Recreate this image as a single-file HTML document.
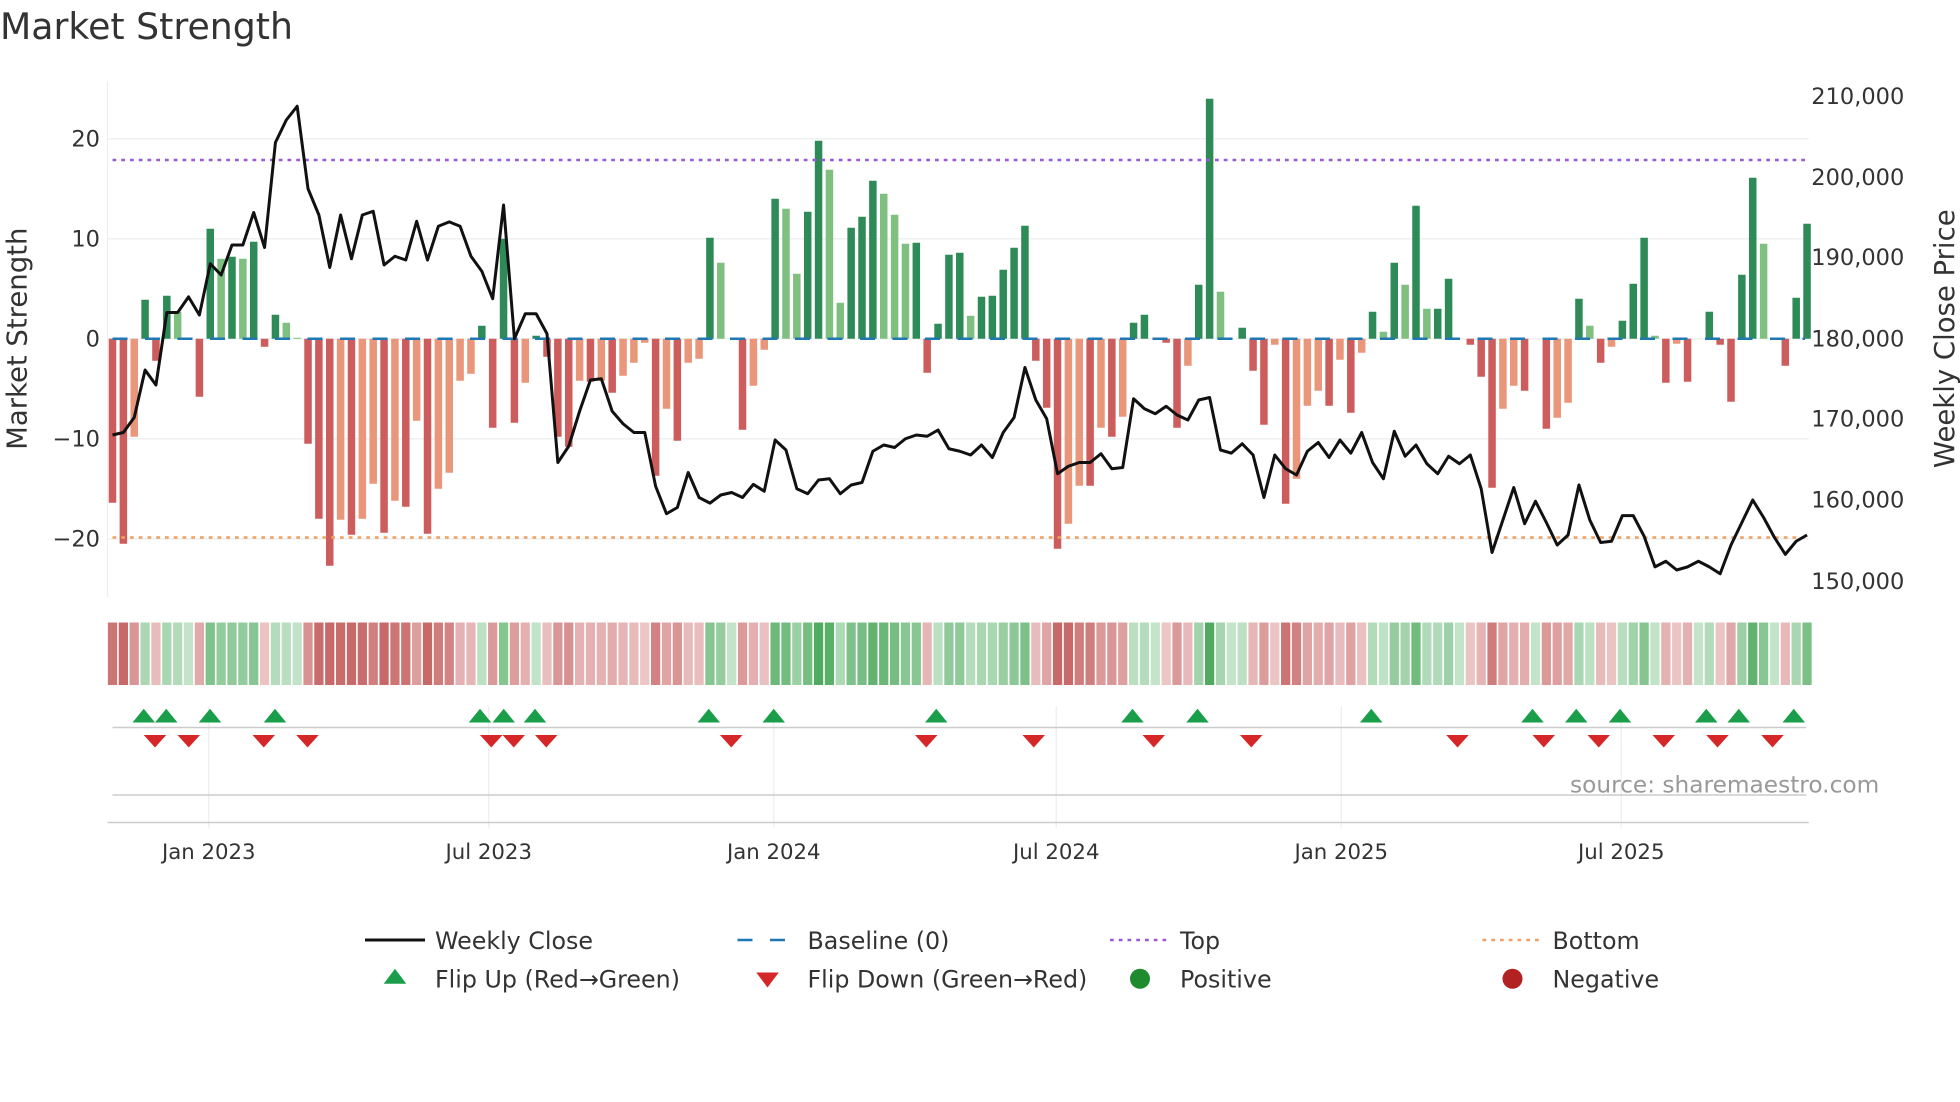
<!DOCTYPE html>
<html><head><meta charset="utf-8"><style>
html,body{margin:0;padding:0;background:#fff;width:1960px;height:1102px;overflow:hidden}
svg{display:block}
text{font-family:"DejaVu Sans","Liberation Sans",sans-serif;fill:#333}
</style></head><body>
<svg id="s" width="1960" height="1102" viewBox="0 0 1568 881.6" xmlns="http://www.w3.org/2000/svg">
<text x="0" y="31" font-size="29">Market Strength</text>
<g id="grid"></g>
<line x1="86" y1="65" x2="86" y2="478" stroke="#eee" stroke-width="1"/>
<g font-size="18" text-anchor="end">
<text x="80" y="117">20</text><text x="80" y="197">10</text><text x="80" y="277">0</text>
<text x="80" y="357">−10</text><text x="80" y="437">−20</text></g>
<g font-size="18">
<text x="1449" y="83">210,000</text><text x="1449" y="148">200,000</text><text x="1449" y="212">190,000</text>
<text x="1449" y="277">180,000</text><text x="1449" y="341">170,000</text><text x="1449" y="406">160,000</text>
<text x="1449" y="471">150,000</text></g>
<text transform="translate(21,271) rotate(-90)" font-size="22" text-anchor="middle">Market Strength</text>
<text transform="translate(1563,271) rotate(-90)" font-size="22" text-anchor="middle">Weekly Close Price</text>
<g id="bars"></g>
<line x1="90" y1="128" x2="1444" y2="128" stroke="#9b59d6" stroke-width="2" stroke-dasharray="3,4"/>
<line x1="90" y1="430" x2="1444" y2="430" stroke="#f0a060" stroke-width="2" stroke-dasharray="3,4"/>
<g id="base"></g>
<polyline id="pl" fill="none" stroke="#111" stroke-width="2.4" stroke-linejoin="round"/>
<g id="heat"></g>
<g id="vg" stroke="#eee" stroke-width="1"></g>
<line x1="90" y1="582" x2="1445" y2="582" stroke="#ccc" stroke-width="1.2"/>
<line x1="90" y1="636" x2="1445" y2="636" stroke="#ccc" stroke-width="1.2"/>
<line x1="86" y1="658" x2="1447" y2="658" stroke="#ccc" stroke-width="1.2"/>
<g id="mk"></g>
<text x="1256" y="634" font-size="18.6" fill="#999" style="fill:#999">source: sharemaestro.com</text>
<g font-size="17" text-anchor="middle">
<text x="167" y="687">Jan 2023</text><text x="391" y="687">Jul 2023</text><text x="619" y="687">Jan 2024</text>
<text x="845" y="687">Jul 2024</text><text x="1073" y="687">Jan 2025</text><text x="1297" y="687">Jul 2025</text></g>
<g font-size="19">
<line x1="292" y1="752" x2="340" y2="752" stroke="#111" stroke-width="2.4"/><text x="348" y="759">Weekly Close</text>
<line x1="590" y1="752" x2="636" y2="752" stroke="#1f77b4" stroke-width="2" stroke-dasharray="12,14"/><text x="646" y="759">Baseline (0)</text>
<line x1="888" y1="752" x2="934" y2="752" stroke="#9b59d6" stroke-width="2" stroke-dasharray="3,4"/><text x="944" y="759">Top</text>
<line x1="1186" y1="752" x2="1232" y2="752" stroke="#f0a060" stroke-width="2" stroke-dasharray="3,4"/><text x="1242" y="759">Bottom</text>
<polygon points="307,787 325,787 316,775" fill="#1a9e4a"/><text x="348" y="790">Flip Up (Red→Green)</text>
<polygon points="605,778 623,778 614,790" fill="#d62728"/><text x="646" y="790">Flip Down (Green→Red)</text>
<circle cx="912" cy="783" r="8" fill="#1e8c2e"/><text x="944" y="790">Positive</text>
<circle cx="1210" cy="783" r="8" fill="#b22222"/><text x="1242" y="790">Negative</text>
</g>
</svg>
<script>
var V=[-16.4,-20.5,-9.8,3.9,-2.2,4.3,2.7,0,-5.8,11,8,8.2,8,9.7,-0.8,2.4,1.6,0.1,-10.5,-18,-22.7,-18.1,-19.6,-18,-14.5,-19.4,-16.2,-16.8,-8.2,-19.5,-15,-13.4,-4.2,-3.5,1.3,-8.9,10,-8.4,-4.4,0.3,-1.8,-9.8,-10.8,-4.2,-4.3,-4.2,-5.4,-3.7,-2.4,-0.4,-13.7,-7,-10.2,-2.4,-2,10.1,7.6,0,-9.1,-4.7,-1.1,14,13,6.5,12.7,19.8,16.9,3.6,11.1,12.2,15.8,14.5,12.4,9.5,9.6,-3.4,1.5,8.4,8.6,2.3,4.2,4.3,6.9,9.1,11.3,-2.2,-6.9,-21,-18.5,-14.7,-14.7,-8.9,-9.8,-7.8,1.6,2.4,0,-0.4,-8.9,-2.7,5.4,24,4.7,0,1.1,-3.2,-8.6,-0.6,-16.5,-14,-6.7,-5.2,-6.7,-2.1,-7.4,-1.4,2.7,0.7,7.6,5.4,13.3,3,3,6,0,-0.6,-3.8,-14.9,-7,-4.7,-5.2,0,-9,-7.9,-6.4,4,1.3,-2.4,-0.8,1.8,5.5,10.1,0.3,-4.4,-0.5,-4.3,0,2.7,-0.6,-6.3,6.4,16.1,9.5,0,-2.7,4.1,11.5];
var L=[348,346,334,296,308,250,250,237.5,252,211,220,196,196,170,198,114,96,85,151,172,214,172,207,172,169,212,205,208,177,208,181,177.5,181,205,217,239,164,271,251,251,267,370,357,329,304,303,329,339,346,346,389,411,406,378,398,402.5,396,394,398,387.5,393,352,360,391,395,384,383,395,388,386,361,356,358,351,348,349,344,359,361,364,356,366,346,334,294,320,335,379,373,370,370,363,375,374,319,327,331,325,332,336,320,318,360,362.5,355,364,398,364,375,380,361,354,366,352,362.5,346,370,383,345,365,356,371,379,365,371,364,391,442,416,390,419,401,418,436,428,388,416,434,433,412.5,412.5,429,453.5,449,456,453.5,449,453.5,459,436,418,400,414,430,443.5,433,428];
var NS="http://www.w3.org/2000/svg",X=function(i){return 90+i*8.69};
function el(p,t,a){var e=document.createElementNS(NS,t);for(var k in a)e.setAttribute(k,a[k]);document.getElementById(p).appendChild(e);return e}
[111,191,271,351,431].forEach(function(y){el("grid","line",{x1:86,x2:1447,y1:y,y2:y,stroke:"#eef0f2","stroke-width":1.2})});
[167,391,619,845,1073,1297].forEach(function(x){el("vg","line",{x1:x,x2:x,y1:565,y2:662})});
var pts=[];
V.forEach(function(v,i){var x=X(i);pts.push(x+","+L[i]);
 var prev=i>0?V[i-1]:0;var c;
 if(v>=0)c=(v>=prev?"#2e8b57":"#7fbf7f");else c=(v<=prev?"#cd5c5c":"#e9967a");
 if(Math.abs(v)>0.05){var h=Math.abs(v)*8;el("bars","rect",{x:x-3,width:6,y:v>0?271-h:271,height:h,fill:c});}
 var a=Math.min(1,0.15+Math.abs(v)/22);var col;
 if(v>=0){col="rgb("+Math.round(215-(215-80)*a)+","+Math.round(238-(238-170)*a)+","+Math.round(220-(220-95)*a)+")";}
 else{col="rgb("+Math.round(243-(243-200)*a)+","+Math.round(215-(215-105)*a)+","+Math.round(216-(216-105)*a)+")";}
 el("heat","rect",{x:x-3.7,width:7.4,y:498,height:50,fill:col});
});
el("base","line",{x1:90,x2:1444,y1:271,y2:271,stroke:"#1f77b4","stroke-width":2,"stroke-dasharray":"12,14"});
document.getElementById("pl").setAttribute("points",pts.join(" "));
[115,133,168,220,384,403,428,567,619,749,906,958,1097,1226,1261,1296,1365,1391,1435].forEach(function(x){el("mk","polygon",{points:(x-9)+",578 "+(x+9)+",578 "+x+",567",fill:"#1a9e4a"})});
[124,151,211,246,393,411,437,585,741,827,923,1001,1166,1235,1279,1331,1374,1418].forEach(function(x){el("mk","polygon",{points:(x-9)+",588 "+(x+9)+",588 "+x+",598",fill:"#d62728"})});
</script>
</body></html>
